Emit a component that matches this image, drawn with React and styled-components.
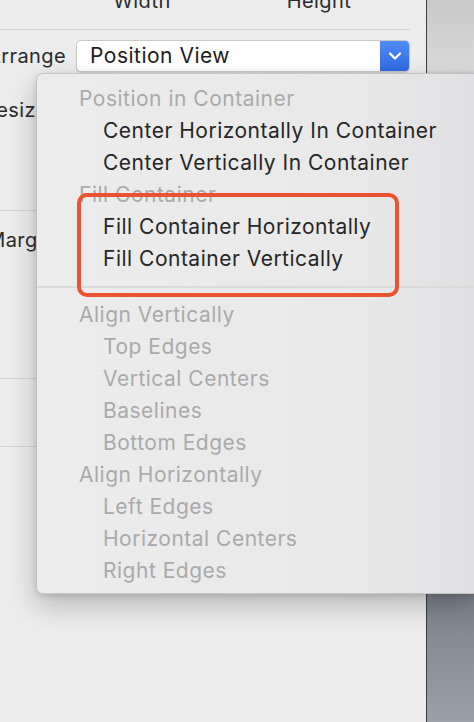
import React from "react";
import styled, { createGlobalStyle } from "styled-components";

const GlobalStyle = createGlobalStyle`
  html, body {
    margin: 0;
    padding: 0;
    background: #ececec;
  }
  body {
    font-family: Inter, "Liberation Sans", sans-serif;
    -webkit-font-smoothing: antialiased;
  }
`;

const Screen = styled.div`
  position: relative;
  width: 474px;
  height: 722px;
  display: flex;
  overflow: hidden;
`;

const Inspector = styled.div`
  width: 426px;
  flex: none;
  background: #ececec;
  border-right: 1px solid #3a3c40;
  display: flex;
  flex-direction: column;
  overflow: hidden;
`;

const Desktop = styled.div`
  flex: 1;
  background: linear-gradient(
    to bottom,
    #c9c9c9 0px,
    #d9d9d9 70px,
    #767c85 110px,
    #7d838c 600px,
    #9aa0a8 722px
  );
`;

const SizeHeader = styled.div`
  display: flex;
  margin-top: -11px;
  height: 40px;
  border-bottom: 1px solid #d4d4d4;
  margin-right: 16px;
  font-size: 20px;
  letter-spacing: 0.4px;
  color: #2b2b2b;
`;

const SizeLabel = styled.span`
  width: ${(p) => p.w}px;
  text-align: center;
`;

const Row = styled.div`
  display: flex;
  align-items: ${(p) => (p.top ? "flex-start" : "center")};
  height: ${(p) => p.h}px;
  flex: none;
  border-bottom: ${(p) => (p.line ? "1px solid #d4d4d4" : "none")};
  margin-right: 16px;
`;

const FieldLabel = styled.span`
  width: 66px;
  flex: none;
  margin-top: ${(p) => p.offset || 0}px;
  font-size: 20px;
  letter-spacing: 0.4px;
  color: #2b2b2b;
  text-align: right;
  white-space: nowrap;
  direction: rtl;
`;

const Popup = styled.div`
  margin-left: 10px;
  width: 335px;
  height: 32px;
  box-sizing: border-box;
  display: flex;
  background: #ffffff;
  border: 1px solid #c9c9c9;
  border-radius: 5px;
  box-shadow: 0 1px 1px rgba(0, 0, 0, 0.12);
  overflow: hidden;
`;

const PopupText = styled.span`
  flex: 1;
  padding-left: 13px;
  font-size: 21px;
  letter-spacing: 0.5px;
  line-height: 30px;
  color: #1d1d1d;
`;

const PopupArrow = styled.span`
  width: 29px;
  display: flex;
  align-items: center;
  justify-content: center;
  background: linear-gradient(to bottom, #4f8cf3, #2f6be4);
`;

const Menu = styled.div`
  position: absolute;
  left: 36px;
  top: 73px;
  width: 444px;
  height: 521px;
  box-sizing: border-box;
  padding: 9px 0 8px;
  border-radius: 7px;
  border: 1px solid rgba(0, 0, 0, 0.14);
  background: linear-gradient(to right, #ececec 0%, #e9e9ea 70%, #e0e0e2 100%);
  box-shadow: 0 12px 28px rgba(0, 0, 0, 0.22), 0 2px 6px rgba(0, 0, 0, 0.12);
`;

const MenuItem = styled.div`
  height: 32px;
  line-height: 32px;
  padding-left: ${(p) => (p.header ? 42 : 66)}px;
  font-size: 21px;
  letter-spacing: 0.5px;
  white-space: nowrap;
  color: ${(p) => (p.enabled ? "#262626" : "#aaaaaa")};
`;

const MenuSeparator = styled.div`
  height: 24px;
  display: flex;
  align-items: center;
  &::after {
    content: "";
    flex: 1;
    height: 2px;
    background: #dadadb;
  }
`;

const Highlight = styled.div`
  position: absolute;
  left: 77px;
  top: 193px;
  width: 322px;
  height: 104px;
  box-sizing: border-box;
  border: 4px solid #eb5231;
  border-radius: 10px;
`;

const menuGroups = [
  {
    title: "Position in Container",
    items: [
      ["Center Horizontally In Container", true],
      ["Center Vertically In Container", true],
    ],
  },
  {
    title: "Fill Container",
    items: [
      ["Fill Container Horizontally", true],
      ["Fill Container Vertically", true],
    ],
    separator: true,
  },
  {
    title: "Align Vertically",
    items: [
      ["Top Edges", false],
      ["Vertical Centers", false],
      ["Baselines", false],
      ["Bottom Edges", false],
    ],
  },
  {
    title: "Align Horizontally",
    items: [
      ["Left Edges", false],
      ["Horizontal Centers", false],
      ["Right Edges", false],
    ],
  },
];

const Chevron = () => (
  <svg width="14" height="10" viewBox="0 0 14 10">
    <path
      d="M2 2.5 L7 7.5 L12 2.5"
      fill="none"
      stroke="#ffffff"
      strokeWidth="2.2"
      strokeLinecap="round"
      strokeLinejoin="round"
    />
  </svg>
);

const App = () => {
  return (
    <Screen>
      <GlobalStyle />
      <Inspector>
        <SizeHeader>
          <SizeLabel w={284}>Width</SizeLabel>
          <SizeLabel w={70}>Height</SizeLabel>
        </SizeHeader>
        <Row h={52}>
          <FieldLabel>Arrange</FieldLabel>
          <Popup>
            <PopupText>Position View</PopupText>
            <PopupArrow>
              <Chevron />
            </PopupArrow>
          </Popup>
        </Row>
        <Row h={128} line top>
          <FieldLabel offset={16}>Resizing</FieldLabel>
        </Row>
        <Row h={167} line top>
          <FieldLabel offset={17}>Margins</FieldLabel>
        </Row>
        <Row h={67} line />
      </Inspector>
      <Desktop />
      <Menu>
        {menuGroups.map((group) => (
          <React.Fragment key={group.title}>
            <MenuItem header>{group.title}</MenuItem>
            {group.items.map(([label, enabled]) => (
              <MenuItem key={label} enabled={enabled}>
                {label}
              </MenuItem>
            ))}
            {group.separator && <MenuSeparator />}
          </React.Fragment>
        ))}
      </Menu>
      <Highlight />
    </Screen>
  );
};

export default App;
